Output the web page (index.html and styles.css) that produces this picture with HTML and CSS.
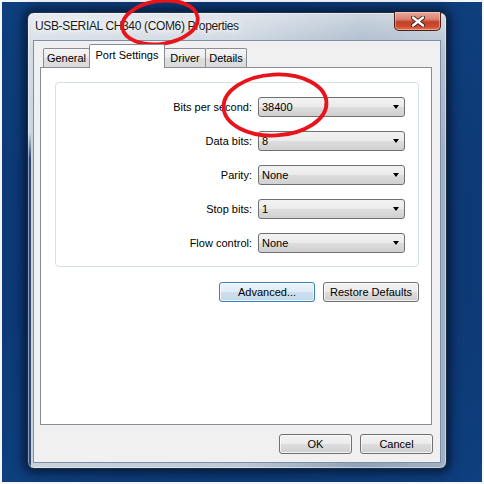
FILE: index.html
```html
<!DOCTYPE html>
<html>
<head>
<meta charset="utf-8">
<link rel="stylesheet" href="styles.css">
</head>
<body>
<div class="desktop">
  <div class="window">
    <div class="titlebar">
      <span class="title">USB-SERIAL CH340 (COM6) Properties</span>
      <div class="close">
        <svg width="14" height="11" viewBox="0 0 14 11">
          <path d="M2 1.5 L12 9.5 M12 1.5 L2 9.5" stroke="#4a1c14" stroke-width="4.2" stroke-linecap="round"/>
          <path d="M2 1.5 L12 9.5 M12 1.5 L2 9.5" stroke="#ffffff" stroke-width="2.4" stroke-linecap="round"/>
        </svg>
      </div>
    </div>
    <div class="client">
      <div class="tabs">
        <div class="tab t-general">General</div>
        <div class="tab active t-port">Port Settings</div>
        <div class="tab t-driver">Driver</div>
        <div class="tab t-details">Details</div>
      </div>
      <div class="panel">
        <div class="group">
          <span class="label">Bits per second:</span>
          <div class="combo"><span>38400</span><i class="arrow"></i></div>
          <span class="label">Data bits:</span>
          <div class="combo"><span>8</span><i class="arrow"></i></div>
          <span class="label">Parity:</span>
          <div class="combo"><span>None</span><i class="arrow"></i></div>
          <span class="label">Stop bits:</span>
          <div class="combo"><span>1</span><i class="arrow"></i></div>
          <span class="label">Flow control:</span>
          <div class="combo"><span>None</span><i class="arrow"></i></div>
        </div>
        <div class="actions">
          <div class="btn btn-default">Advanced...</div>
          <div class="btn">Restore Defaults</div>
        </div>
      </div>
      <div class="footer">
        <div class="btn btn-small">OK</div>
        <div class="btn btn-small">Cancel</div>
      </div>
    </div>
  </div>
</div>
<svg class="marks" width="484" height="484" viewBox="0 0 484 484">
  <ellipse cx="160" cy="22.5" rx="38" ry="21.5" transform="rotate(-8 160 22.5)" fill="none" stroke="#e8141c" stroke-width="3.8"/>
  <ellipse cx="275" cy="105" rx="51.5" ry="30.5" transform="rotate(-3 275 105)" fill="none" stroke="#e8141c" stroke-width="3.8"/>
</svg>
</body>
</html>
```
FILE: styles.css
```css
html, body {
  margin: 0;
  padding: 0;
  background: #f4f6f8;
}
body {
  width: 484px;
  height: 484px;
  font-family: "Liberation Sans", Arial, sans-serif;
  font-size: 11px;
  color: #000;
}
.desktop {
  margin: 2px;
  width: 480px;
  height: 480px;
  box-sizing: border-box;
  padding: 10px 0 0 25px;
  background: radial-gradient(ellipse at 50% 50%, #0a2c5e 0%, #0d3a76 70%, #0f3f7f 100%);
}
.window {
  width: 420px;
  height: 457px;
  box-sizing: border-box;
  border: 1px solid #1c2d44;
  border-radius: 7px;
  padding: 0 5px 5px 5px;
  display: flex;
  flex-direction: column;
  background:
    linear-gradient(180deg, rgba(46,74,114,0) 0, rgba(46,74,114,0) 120px, #2e4a72 145px, #2e4a72 100%) 0 0 / 3px 100% no-repeat,
    linear-gradient(180deg, rgba(255,255,255,0.55) 0, rgba(255,255,255,0.2) 40px, rgba(255,255,255,0) 140px),
    linear-gradient(90deg, #c9d3de 0%, #bcc8d5 50%, #90a3ba 80%, #a2b2c5 100%);
  box-shadow: 0 0 10px 4px rgba(2, 12, 30, 0.65), inset 0 0 0 1px rgba(255,255,255,0.45);
}
.titlebar {
  height: 27px;
  display: flex;
  align-items: flex-start;
}
.title {
  padding: 6px 0 0 2px;
  font-size: 12px;
  letter-spacing: -0.35px;
  color: #1b1b1b;
  text-shadow: 0 0 6px #fff, 0 0 10px #fff, 0 0 14px rgba(255,255,255,0.9);
}
.close {
  margin-left: auto;
  margin-top: -1px;
  width: 47px;
  height: 19px;
  box-sizing: border-box;
  border: 1px solid #4a2018;
  border-top: none;
  border-radius: 0 0 5px 5px;
  background: linear-gradient(180deg, #e9a99a 0%, #d98472 40%, #c2412a 55%, #cc4a30 80%, #e07a55 100%);
  box-shadow: inset 0 0 0 1px rgba(255,220,210,0.45);
  display: flex;
  align-items: center;
  justify-content: center;
}
.client {
  flex: 1;
  border: 1px solid #7d8fa6;
  background: #f0f0f0;
  display: flex;
  flex-direction: column;
}
.tabs {
  display: flex;
  align-items: flex-end;
  height: 26px;
  margin: 0 8px 0 6px;
  padding-left: 3px;
  position: relative;
  z-index: 1;
}
.tab {
  height: 19px;
  box-sizing: border-box;
  border: 1px solid #898c95;
  border-bottom: none;
  border-radius: 2px 2px 0 0;
  background: linear-gradient(180deg, #f5f5f5 0%, #ebebeb 50%, #dedede 51%, #dadada 100%);
  text-align: center;
  line-height: 18px;
  margin-left: -1px;
}
.t-general { width: 47px; margin-left: 0; }
.t-port { width: 76px; }
.t-driver { width: 42px; }
.t-details { width: 42px; }
.tab.active {
  height: 24px;
  margin-bottom: -1px;
  background: #fff;
  line-height: 20px;
  padding-bottom: 3px;
}
.panel {
  height: 358px;
  box-sizing: border-box;
  margin: 0 8px 0 6px;
  border: 1px solid #898c95;
  background: #fff;
  padding: 14px 12px 0 14px;
}
.group {
  height: 185px;
  box-sizing: border-box;
  border: 1px solid #d5dfe5;
  border-radius: 4px;
  padding: 14px 13px 0 0;
  display: grid;
  grid-template-columns: 1fr 147px;
  grid-auto-rows: 20px;
  column-gap: 6px;
  row-gap: 14px;
  align-items: center;
}
.label {
  text-align: right;
}
.combo {
  height: 20px;
  box-sizing: border-box;
  border: 1px solid #707070;
  border-radius: 3px;
  background: linear-gradient(180deg, #f2f2f2 0%, #ebebeb 50%, #dddddd 51%, #d0d0d0 100%);
  display: flex;
  align-items: center;
  padding-left: 3px;
}
.combo span {
  flex: 1;
}
.arrow {
  width: 0;
  height: 0;
  border-left: 3.5px solid transparent;
  border-right: 3.5px solid transparent;
  border-top: 4px solid #000;
  margin-right: 5px;
}
.actions {
  display: flex;
  justify-content: flex-end;
  gap: 8px;
  margin-top: 15px;
}
.btn {
  width: 96px;
  height: 20px;
  box-sizing: border-box;
  border: 1px solid #707070;
  border-radius: 3px;
  background: linear-gradient(180deg, #f2f2f2 0%, #ebebeb 50%, #dddddd 51%, #cfcfcf 100%);
  display: flex;
  align-items: center;
  justify-content: center;
  box-shadow: inset 0 0 0 1px rgba(255,255,255,0.7);
}
.btn-default {
  border-color: #3c7fb1;
  background: linear-gradient(180deg, #eaf3fa 0%, #dfecf6 50%, #cddfee 51%, #c3d8ea 100%);
}
.btn-small {
  width: 73px;
}
.footer {
  display: flex;
  justify-content: flex-end;
  gap: 8px;
  margin: 9px 7px 0 0;
}
.marks {
  position: absolute;
  left: 0;
  top: 0;
}
```
